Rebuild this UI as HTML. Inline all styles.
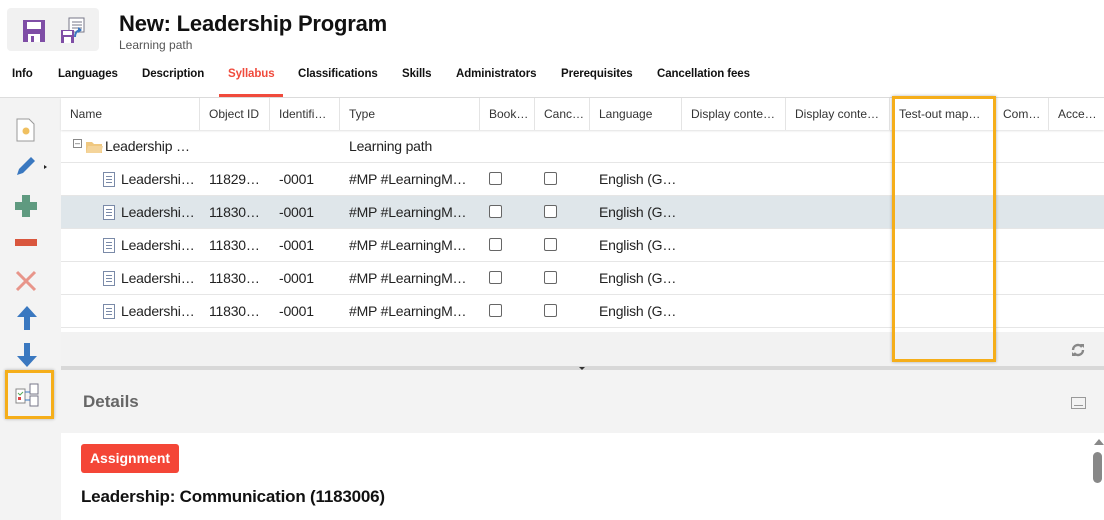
<!DOCTYPE html>
<html><head><style>
*{margin:0;padding:0;box-sizing:border-box}
body{width:1104px;height:520px;overflow:hidden;background:#fff;font-family:"Liberation Sans",Arial,sans-serif;position:relative;color:#222}
.a{position:absolute}
.tab{position:absolute;top:68px;font-size:11.5px;font-weight:bold;color:#111;letter-spacing:-0.1px}
.hc{position:absolute;top:98px;height:32px;line-height:32px;font-size:12px;color:#333;padding-left:9px;border-right:1px solid #e4e4e4;white-space:nowrap}
.row{position:absolute;left:61px;width:1043px;height:33px;border-bottom:1px solid #e6e6e6}
.c{position:absolute;font-size:14px;color:#222;line-height:32px;white-space:nowrap;letter-spacing:-0.2px}
.cb{position:absolute;width:13px;height:13px;border:1px solid #666;border-radius:2px;top:9px;background:#fff}
.doc{position:absolute;left:42px;top:9px;width:12px;height:15px;border:1px solid #7a8aa8;background:#fff}
.doc:after{content:"";position:absolute;left:2px;top:3px;width:6px;height:7px;background:repeating-linear-gradient(#7a8aa8 0 1px,transparent 1px 3px)}
</style></head><body>
<div class="a" style="left:7px;top:8px;width:92px;height:43px;background:#f1f1f1;border-radius:4px"></div>
<svg class="a" style="left:23px;top:20px" width="22" height="22" viewBox="0 0 22 22"><rect x="0" y="0" width="22" height="22" fill="#7f4ea6"/><rect x="4" y="2" width="14" height="7" fill="#fff"/><rect x="5" y="14" width="12" height="8" fill="#fff"/><rect x="8" y="16" width="3" height="6" fill="#7f4ea6"/></svg>
<svg class="a" style="left:59px;top:17px" width="28" height="28" viewBox="0 0 28 28"><rect x="10" y="1" width="15" height="14" fill="#fff" stroke="#778"/><path d="M13 5h10M13 8h10M13 11h10" stroke="#778"/><rect x="2" y="13" width="13" height="13" fill="#7f4ea6"/><rect x="4" y="14" width="9" height="4" fill="#fff"/><rect x="5" y="20" width="7" height="6" fill="#fff"/><path d="M16 20c0-5 3-7 6-7" stroke="#3a78c0" stroke-width="2" fill="none"/><path d="M19 10l4 3-4 3z" fill="#3a78c0"/></svg>
<div class="a" style="left:119px;top:11px;font-size:22px;font-weight:bold;color:#111;letter-spacing:-0.2px">New: Leadership Program</div>
<div class="a" style="left:119px;top:38px;font-size:12px;color:#555">Learning path</div>
<div class="tab" style="left:12px">Info</div>
<div class="tab" style="left:58px">Languages</div>
<div class="tab" style="left:142px">Description</div>
<div class="tab" style="left:228px;color:#f04a3c">Syllabus</div>
<div class="tab" style="left:298px">Classifications</div>
<div class="tab" style="left:402px">Skills</div>
<div class="tab" style="left:456px">Administrators</div>
<div class="tab" style="left:561px">Prerequisites</div>
<div class="tab" style="left:657px">Cancellation fees</div>
<div class="a" style="left:219px;top:94px;width:64px;height:3px;background:#f04a3c"></div>
<div class="a" style="left:0;top:97px;width:1104px;height:1px;background:#ddd"></div>
<div class="a" style="left:0;top:98px;width:61px;height:422px;background:#f3f3f3"></div>
<svg class="a" style="left:16px;top:118px" width="20" height="24" viewBox="0 0 20 24"><path d="M1 1h12l5 5v17H1z" fill="#fff" stroke="#999"/><circle cx="10" cy="13" r="3.5" fill="#f0c060"/></svg>
<svg class="a" style="left:14px;top:154px" width="34" height="24" viewBox="0 0 34 24"><path d="M3 21l2-6L17 3l4 4L9 19z" fill="#3a78c0"/><path d="M30 11l3 2-3 2z" fill="#222"/></svg>
<svg class="a" style="left:14px;top:194px" width="24" height="24" viewBox="0 0 24 24"><path d="M8 1h8v7h7v8h-7v7H8v-7H1V8h7z" fill="#5f9a80"/></svg>
<div class="a" style="left:15px;top:239px;width:22px;height:7px;background:#d9563d"></div>
<svg class="a" style="left:15px;top:270px" width="22" height="22" viewBox="0 0 22 22"><path d="M2 2L20 20M20 2L2 20" stroke="#e8958a" stroke-width="3"/></svg>
<svg class="a" style="left:16px;top:305px" width="22" height="26" viewBox="0 0 22 26"><path d="M11 1L1 12h7v13h6V12h7z" fill="#3a78c0"/></svg>
<svg class="a" style="left:16px;top:342px" width="22" height="26" viewBox="0 0 22 26"><path d="M11 25L1 14h7V1h6v13h7z" fill="#3a78c0"/></svg>
<div class="a" style="left:5px;top:370px;width:49px;height:49px;border:3px solid #f5ae1a;box-shadow:0 0 3px rgba(0,0,0,.3)"></div>
<svg class="a" style="left:15px;top:383px" width="24" height="24" viewBox="0 0 24 24"><path d="M1 6h9v14H1z" fill="#fff" stroke="#888"/><path d="M3 10l2 2 3-3" stroke="#5a5" fill="none"/><rect x="3" y="14" width="3" height="3" fill="#d44"/><rect x="15" y="1" width="8" height="10" fill="#fff" stroke="#778"/><rect x="15" y="13" width="8" height="10" fill="#fff" stroke="#778"/><path d="M10 9h5M10 17h5" stroke="#3a78c0"/></svg>
<div class="a" style="left:61px;top:98px;width:1043px;height:32px;background:#fff;box-shadow:0 1px 2px rgba(0,0,0,.12)"></div>
<div class="hc" style="left:61px;width:139px">Name</div>
<div class="hc" style="left:200px;width:70px">Object ID</div>
<div class="hc" style="left:270px;width:70px">Identifi…</div>
<div class="hc" style="left:340px;width:140px">Type</div>
<div class="hc" style="left:480px;width:55px">Book…</div>
<div class="hc" style="left:535px;width:55px">Canc…</div>
<div class="hc" style="left:590px;width:92px">Language</div>
<div class="hc" style="left:682px;width:104px">Display conte…</div>
<div class="hc" style="left:786px;width:104px">Display conte…</div>
<div class="hc" style="left:890px;width:104px">Test-out map…</div>
<div class="hc" style="left:994px;width:55px">Com…</div>
<div class="hc" style="left:1049px;width:55px;border:none">Acce…</div>
<div class="row" style="top:130px">
 <div class="a" style="left:12px;top:9px;width:9px;height:9px;border:1px solid #888;font-size:9px;line-height:6px;text-align:center;color:#555">–</div>
 <svg class="a" style="left:24px;top:10px" width="18" height="14" viewBox="0 0 18 14"><path d="M1 2h6l2 2h8v9H1z" fill="#f0c880"/><path d="M3 6h15l-2 7H1z" fill="#f4d49a"/></svg>
 <div class="c" style="left:44px">Leadership …</div>
 <div class="c" style="left:288px">Learning path</div>
</div>
<div class="row" style="top:163px"><div class="doc"></div><div class="c" style="left:60px">Leadershi…</div><div class="c" style="left:148px">11829…</div><div class="c" style="left:218px">-0001</div><div class="c" style="left:288px">#MP #LearningM…</div><div class="cb" style="left:428px"></div><div class="cb" style="left:483px"></div><div class="c" style="left:538px">English (G…</div></div>
<div class="row" style="top:196px;background:#dfe6ea"><div class="doc"></div><div class="c" style="left:60px">Leadershi…</div><div class="c" style="left:148px">11830…</div><div class="c" style="left:218px">-0001</div><div class="c" style="left:288px">#MP #LearningM…</div><div class="cb" style="left:428px"></div><div class="cb" style="left:483px"></div><div class="c" style="left:538px">English (G…</div></div>
<div class="row" style="top:229px"><div class="doc"></div><div class="c" style="left:60px">Leadershi…</div><div class="c" style="left:148px">11830…</div><div class="c" style="left:218px">-0001</div><div class="c" style="left:288px">#MP #LearningM…</div><div class="cb" style="left:428px"></div><div class="cb" style="left:483px"></div><div class="c" style="left:538px">English (G…</div></div>
<div class="row" style="top:262px"><div class="doc"></div><div class="c" style="left:60px">Leadershi…</div><div class="c" style="left:148px">11830…</div><div class="c" style="left:218px">-0001</div><div class="c" style="left:288px">#MP #LearningM…</div><div class="cb" style="left:428px"></div><div class="cb" style="left:483px"></div><div class="c" style="left:538px">English (G…</div></div>
<div class="row" style="top:295px"><div class="doc"></div><div class="c" style="left:60px">Leadershi…</div><div class="c" style="left:148px">11830…</div><div class="c" style="left:218px">-0001</div><div class="c" style="left:288px">#MP #LearningM…</div><div class="cb" style="left:428px"></div><div class="cb" style="left:483px"></div><div class="c" style="left:538px">English (G…</div></div>
<div class="a" style="left:61px;top:332px;width:1043px;height:34px;background:#f2f2f2"></div>
<svg class="a" style="left:1071px;top:343px" width="14" height="14" viewBox="0 0 14 14"><path d="M2 7a5 5 0 0 1 9-3M12 7a5 5 0 0 1-9 3" stroke="#888" stroke-width="2.4" fill="none"/><path d="M9 1h4v4z M5 13H1V9z" fill="#888"/></svg>
<div class="a" style="left:61px;top:366px;width:1043px;height:4px;background:#d8d8d8"></div>
<div class="a" style="left:579px;top:367px;width:0;height:0;border-left:3px solid transparent;border-right:3px solid transparent;border-top:3px solid #333"></div>
<div class="a" style="left:61px;top:370px;width:1043px;height:63px;background:#f3f3f3"></div>
<div class="a" style="left:83px;top:392px;font-size:17px;font-weight:bold;color:#666">Details</div>
<div class="a" style="left:1071px;top:397px;width:15px;height:12px;border:1px solid #999"><div style="margin:7px 2px 0;height:1px;background:#999"></div></div>
<div class="a" style="left:81px;top:444px;width:98px;height:29px;background:#f44637;border-radius:3px;color:#fff;font-size:14px;font-weight:bold;line-height:29px;text-align:center">Assignment</div>
<div class="a" style="left:81px;top:487px;font-size:17px;font-weight:bold;color:#111;letter-spacing:-0.2px">Leadership: Communication (1183006)</div>
<div class="a" style="left:1094px;top:439px;width:0;height:0;border-left:5px solid transparent;border-right:5px solid transparent;border-bottom:6px solid #888"></div>
<div class="a" style="left:1093px;top:452px;width:9px;height:31px;background:#888;border-radius:5px"></div>
<div class="a" style="left:892px;top:96px;width:104px;height:266px;border:3px solid #f5ae1a;box-shadow:0 0 3px rgba(0,0,0,.3)"></div>
</body></html>
